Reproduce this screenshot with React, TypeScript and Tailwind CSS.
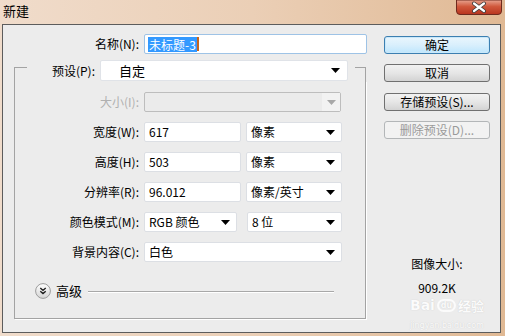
import React from "react";

const cjk = "font-['Noto_Sans_CJK_SC','Microsoft_YaHei',sans-serif]";

function Arrow({ disabled = false }: { disabled?: boolean }) {
    return (
        <svg width="9" height="5" viewBox="0 0 9 5" className="shrink-0">
            <path d="M0 0 H9 L4.5 5 Z" fill={disabled ? "#a8a8a8" : "#000"} />
        </svg>
    );
}

function Select({ value, w }: { value: string, w: string }) {
    return (
        <div className={`${w} h-[20px] ml-[5px] bg-white border border-[#dcdfe4] rounded-[2px] flex items-center justify-between pl-[4px] pr-[6px] leading-[18px]`}>
            <span>{value}</span>
            <Arrow />
        </div>
    );
}

function Field({ value, w }: { value: string, w: string }) {
    return (
        <div className={`${w} h-[20px] ml-[5px] bg-white border border-[#dcdfe4] rounded-[2px] flex items-center pl-[4px] leading-[18px]`}>
            {value}
        </div>
    );
}

function Row({ label, children, mt = "mt-[10px]", labelClass = "" }: { label: string, children: React.ReactNode, mt?: string, labelClass?: string }) {
    return (
        <div className={`flex items-center h-[20px] ${mt}`}>
            <div className={`w-[124px] text-right leading-[20px] ${labelClass}`}>{label}</div>
            {children}
        </div>
    );
}

function Button({ label, variant = "normal" }: { label: string, variant?: "default" | "normal" | "disabled" }) {
    const styles = {
        default: "border-[#3c7fb1] bg-gradient-to-b from-[#eaf6fd] via-[#d9effc] to-[#bee6fd] text-black shadow-[inset_0_0_0_1px_#c9e8fa]",
        normal: "border-[#707070] bg-gradient-to-b from-[#f2f2f2] via-[#e6e6e6] to-[#d3d3d3] text-black",
        disabled: "border-[#b3b6b8] bg-[#f2f2f2] text-[#9a9a9a]",
    }[variant];
    return (
        <div className={`w-[106px] h-[18px] border rounded-[3px] flex items-center justify-center leading-[16px] ${styles}`}>
            {label}
        </div>
    );
}

export default function App() {
    return (
        <div className={`w-[505px] h-[336px] overflow-hidden flex flex-col bg-gradient-to-r from-[#f0dccb] via-[#ebcfb6] to-[#e0b994] text-[12px] text-black ${cjk}`}>

            {/* Title bar */}
            <div className="h-[24px] flex items-start justify-between shrink-0">
                <div className="pl-[3px] pt-[3px] leading-[16px] text-[13px]">新建</div>
                <svg width="46" height="15" viewBox="0 0 46 15" className="mr-[3px]">
                    <defs>
                        <linearGradient id="cl" x1="0" y1="0" x2="0" y2="1">
                            <stop offset="0" stopColor="#e8a490" />
                            <stop offset="0.45" stopColor="#d0583c" />
                            <stop offset="1" stopColor="#b8341e" />
                        </linearGradient>
                    </defs>
                    <path d="M0.5 0 V11 Q0.5 14.5 4 14.5 H42 Q45.5 14.5 45.5 11 V0 Z" fill="url(#cl)" stroke="#6e2a1e" />
                    <path d="M18 3.5 L28 11 M28 3.5 L18 11" stroke="#3b3b3b" strokeWidth="4" strokeLinecap="round" />
                    <path d="M18 3.5 L28 11 M28 3.5 L18 11" stroke="#fff" strokeWidth="2.2" strokeLinecap="round" />
                </svg>
            </div>

            {/* Dialog body */}
            <div className="ml-[2px] mr-[4px] h-[309px] border border-[#5c5c5c] bg-[#ececec] flex relative">

                {/* Left form */}
                <div className="w-[368px] flex flex-col">
                    {/* Name */}
                    <div className="flex items-center h-[20px] mt-[9px]">
                        <div className="w-[136px] text-right leading-[20px]">名称(N):</div>
                        <div className="w-[223px] h-[20px] ml-[5px] bg-white border border-[#9ec3e6] rounded-[2px] flex items-center pl-[3px]">
                            <span className="bg-[#3399ff] text-white leading-[15px] px-px">未标题-3</span>
                            <span className="w-[2px] h-[14px] bg-[#c8641c]" />
                        </div>
                    </div>

                    {/* Group box */}
                    <div className="w-[352px] ml-[11px] mt-[6px] flex flex-col">
                        <div className="flex items-start h-[21px]">
                            <div className="w-[13px] h-[14px] mt-[7px] border-l border-t border-[#a3a3a3]" />
                            <div className="w-[68px] text-right leading-[21px]">预设(P):</div>
                            <div className="w-[248px] h-[21px] ml-[5px] bg-white border border-[#e0e3e8] rounded-[2px] flex items-center justify-between pl-[18px] pr-[7px]">
                                <span className="text-[13px]">自定</span>
                                <Arrow />
                            </div>
                            <div className="w-[11px] h-[14px] mt-[7px] ml-[7px] border-r border-t border-[#a3a3a3]" />
                        </div>

                        <div className="h-[238px] border-l border-r border-b border-[#a3a3a3] shadow-[1px_1px_0_#fff] flex flex-col">
                            <Row label="大小(I):" mt="mt-[11px]" labelClass="text-[#b0b0b0]">
                                <div className="w-[197px] h-[20px] ml-[5px] border border-[#bdbdbd] rounded-[2px] bg-[#ebebeb] flex items-center justify-end">
                                    <div className="w-[18px] h-full bg-[#f2f2f2] flex items-center justify-center">
                                        <Arrow disabled />
                                    </div>
                                </div>
                            </Row>
                            <Row label="宽度(W):">
                                <Field value="617" w="w-[97px]" />
                                <Select value="像素" w="w-[96px]" />
                            </Row>
                            <Row label="高度(H):">
                                <Field value="503" w="w-[97px]" />
                                <Select value="像素" w="w-[96px]" />
                            </Row>
                            <Row label="分辨率(R):">
                                <Field value="96.012" w="w-[97px]" />
                                <Select value="像素/英寸" w="w-[96px]" />
                            </Row>
                            <Row label="颜色模式(M):">
                                <Select value="RGB 颜色" w="w-[93px]" />
                                <div className="ml-[5px]" />
                                <Select value="8 位" w="w-[95px]" />
                            </Row>
                            <Row label="背景内容(C):">
                                <Select value="白色" w="w-[198px]" />
                            </Row>

                            {/* Advanced */}
                            <div className="flex items-center h-[16px] mt-[21px] pl-[20px]">
                                <svg width="16" height="16" viewBox="0 0 16 16" className="shrink-0">
                                    <defs>
                                        <linearGradient id="adv" x1="0" y1="0" x2="0" y2="1">
                                            <stop offset="0" stopColor="#ffffff" />
                                            <stop offset="1" stopColor="#d4d4d4" />
                                        </linearGradient>
                                    </defs>
                                    <circle cx="8" cy="8" r="7.4" fill="url(#adv)" stroke="#9c9c9c" strokeWidth="1" />
                                    <path d="M5.3 5 L8 7.4 L10.7 5 M5.3 8.2 L8 10.6 L10.7 8.2" fill="none" stroke="#1e1e1e" strokeWidth="1.4" />
                                </svg>
                                <span className="ml-[5px] text-[13px] leading-[16px]">高级</span>
                                <div className="ml-[6px] w-[246px] h-px bg-[#a8a8a8] shadow-[0_1px_0_#fff]" />
                            </div>
                        </div>
                    </div>
                </div>

                {/* Right buttons */}
                <div className="ml-[13px] w-[106px] flex flex-col items-center">
                    <div className="mt-[11px]"><Button label="确定" variant="default" /></div>
                    <div className="mt-[10px]"><Button label="取消" /></div>
                    <div className="mt-[11px]"><Button label="存储预设(S)..." /></div>
                    <div className="mt-[10px]"><Button label="删除预设(D)..." variant="disabled" /></div>
                    <div className="mt-[117px] leading-[16px]">图像大小:</div>
                    <div className="mt-[8px] leading-[16px]">909.2K</div>
                </div>

                {/* Watermark */}
                <div className="absolute left-[407px] top-[273px] flex flex-col items-center text-white opacity-80 pointer-events-none whitespace-nowrap">
                    <div className="flex items-center gap-[2px] font-['DejaVu_Sans',sans-serif] font-bold text-[14px] leading-[15px] [text-shadow:0_0_1px_#bdbdbd]">
                        <span>Bai</span>
                        <span className="w-[19px] h-[13px] rounded-full border-2 border-white text-[8px] leading-[9px] text-center">du</span>
                        <span className={`${cjk} text-[13px]`}>经验</span>
                    </div>
                    <div className="mt-[8px] text-[8px] leading-[10px] font-['DejaVu_Sans',sans-serif] [text-shadow:0_0_1px_#bdbdbd]">jingyan.baidu.com</div>
                </div>
            </div>
        </div>
    );
}
